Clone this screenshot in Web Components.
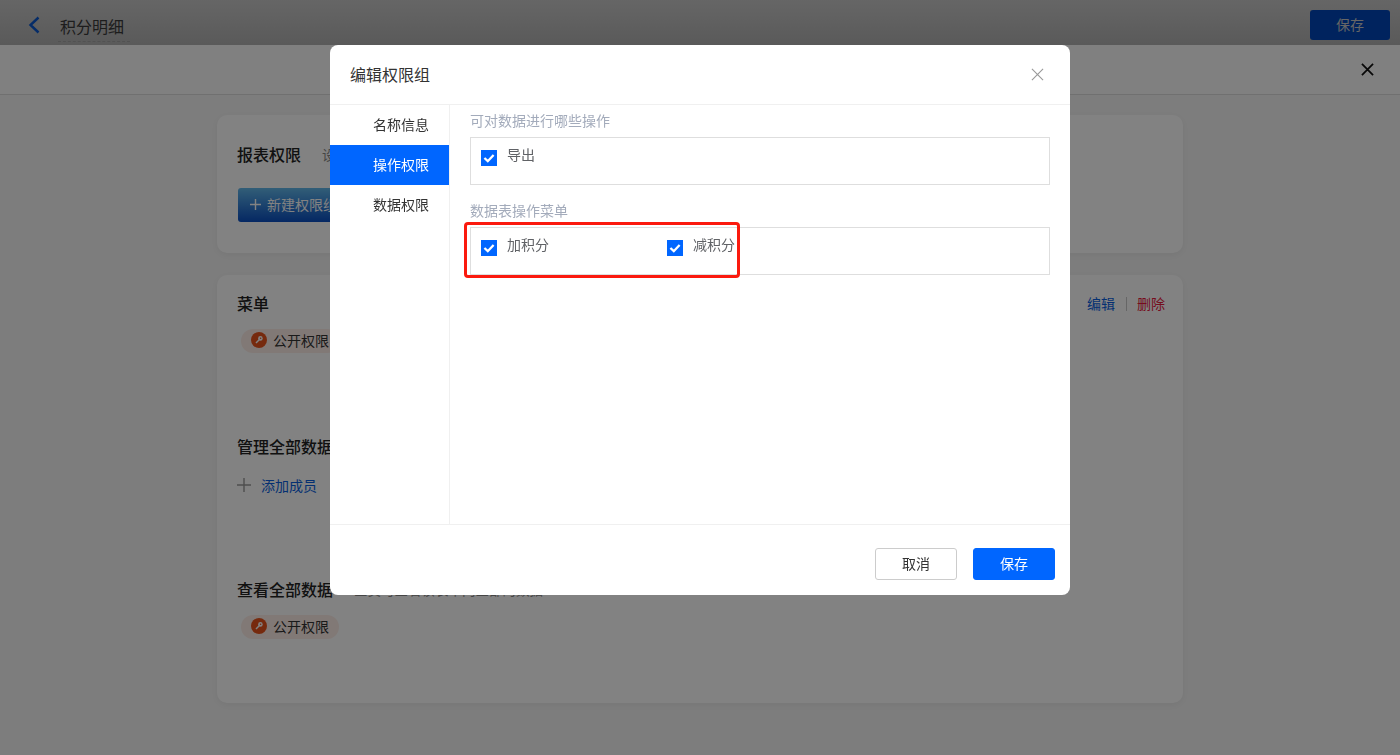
<!DOCTYPE html>
<html lang="zh">
<head>
<meta charset="utf-8">
<title>积分明细</title>
<style>
    html, body {
        margin: 0;
        height: 100%;
        overflow: hidden;
        font-family: "Noto Sans CJK SC", "Liberation Sans", sans-serif;
        font-size: 14px;
        color: #333;
        background: #f5f5f5;
    }
</style>
</head>
<body>
<top-bar title-text="积分明细"></top-bar>
<sub-bar></sub-bar>
<page-content>
    <perm-card>
        <card-section heading="报表权限" note="设置">
            <new-group-button>新建权限组</new-group-button>
        </card-section>
    </perm-card>
    <perm-card tall>
        <card-section heading="菜单" actions>
            <role-tag>公开权限</role-tag>
        </card-section>
        <card-section heading="管理全部数据" note="管理员可管理表单内全部的数据">
            <add-member>添加成员</add-member>
        </card-section>
        <card-section heading="查看全部数据" note="全员可查看该表单内全部的数据">
            <role-tag>公开权限</role-tag>
        </card-section>
    </perm-card>
</page-content>
<edit-dialog heading="编辑权限组">
    <check-group label="可对数据进行哪些操作">
        <check-item>导出</check-item>
    </check-group>
    <check-group label="数据表操作菜单" marked>
        <check-item>加积分</check-item>
        <check-item>减积分</check-item>
    </check-group>
</edit-dialog>

<script>
const CLOSE_ICON = (size, stroke, width) => `
<svg width="${size}" height="${size}" viewBox="0 0 14 14" fill="none" stroke="${stroke}" stroke-width="${width}">
    <path d="M1 1 L13 13 M13 1 L1 13"/>
</svg>`;

class TopBar extends HTMLElement {
    constructor() {
        super();
        this.attachShadow({ mode: 'open' }).innerHTML = `
<style>
    :host {
        display: flex;
        align-items: center;
        height: 45px;
        box-sizing: border-box;
        padding: 5px 10px 0 28px;
        background: linear-gradient(#c8c8c8, #b0b0b0);
    }
    svg { display: block; margin-right: 18px; }
    .title {
        font-size: 16px;
        line-height: 24px;
        margin: 7px 0 0 0;
        padding: 0 6px 3px 2px;
        color: #3a3a3a;
        border-bottom: 1px dashed #a0a0a0;
        position: relative;
        top: -1px;
    }
    .save {
        margin-left: auto;
        width: 80px;
        height: 30px;
        box-sizing: border-box;
        padding-bottom: 2px;
        border-radius: 3px;
        background: #0046b8;
        color: #c8c8c8;
        display: flex;
        align-items: center;
        justify-content: center;
    }
</style>
<svg width="12" height="18" viewBox="0 0 12 18" fill="none" stroke="#0a56cc" stroke-width="2.4"><path d="M10.5 1.5 L2.5 9 L10.5 16.5"/></svg>
<span class="title">${this.getAttribute('title-text')}</span>
<span class="save">保存</span>`;
    }
}

class SubBar extends HTMLElement {
    constructor() {
        super();
        this.attachShadow({ mode: 'open' }).innerHTML = `
<style>
    :host {
        display: flex;
        justify-content: flex-end;
        align-items: center;
        height: 50px;
        box-sizing: border-box;
        padding: 0 26px 0 0;
        background: #fbfbfb;
        border-bottom: 1px solid #dcdcdc;
    }
    svg { display: block; }
</style>
${CLOSE_ICON(13, '#111', 1.9)}`;
    }
}

class PageContent extends HTMLElement {
    constructor() {
        super();
        this.attachShadow({ mode: 'open' }).innerHTML = `
<style>
    :host {
        display: flex;
        flex-direction: column;
        gap: 22px;
        width: 966px;
        margin: 20px auto 0;
    }
</style>
<slot></slot>`;
    }
}

class PermCard extends HTMLElement {
    constructor() {
        super();
        this.attachShadow({ mode: 'open' }).innerHTML = `
<style>
    :host {
        display: block;
        box-sizing: border-box;
        height: 138px;
        padding: 18px 20px 0;
        background: #fff;
        border-radius: 10px;
        box-shadow: 0 2px 6px rgba(0, 0, 0, .05);
    }
    :host([tall]) { height: 428px; }
</style>
<slot></slot>`;
    }
}

class CardSection extends HTMLElement {
    constructor() {
        super();
        const note = this.getAttribute('note');
        const actions = this.hasAttribute('actions') ? `
<span class="actions"><a class="edit">编辑</a><i></i><a class="del">删除</a></span>` : '';
        this.attachShadow({ mode: 'open' }).innerHTML = `
<style>
    :host { display: block; height: 143px; }
    :host(:first-child:last-child) { height: auto; padding-top: 11px; }
    .head { display: flex; align-items: center; height: 20px; }
    h3 { margin: 0; font-size: 16px; font-weight: 500; color: #222; }
    .note { margin-left: 21px; color: #888; font-size: 13.5px; }
    .actions { margin: 0 -2px 0 auto; display: flex; align-items: center; }
    .edit { color: #0a5fe0; }
    .del { color: #e8183c; }
    i { width: 1px; height: 14px; background: #c8c8c8; margin: 2px 10px 0 11px; }
    .body { margin-top: 16px; }
</style>
<div class="head"><h3>${this.getAttribute('heading')}</h3>${note ? `<span class="note">${note}</span>` : ''}${actions}</div>
<div class="body"><slot></slot></div>`;
    }
}

class NewGroupButton extends HTMLElement {
    constructor() {
        super();
        this.attachShadow({ mode: 'open' }).innerHTML = `
<style>
    :host {
        display: inline-flex;
        align-items: center;
        gap: 6px;
        height: 34px;
        box-sizing: border-box;
        margin: 8px 0 0 1px;
        padding: 0 12px 2px;
        border-radius: 3px;
        color: #fff;
        background: linear-gradient(#62b8ea, #0a4ec2);
    }
    svg { display: block; }
</style>
<svg width="11" height="11" viewBox="0 0 11 11" stroke="#fff" stroke-width="1.4"><path d="M5.5 0 V11 M0 5.5 H11"/></svg>
<slot></slot>`;
    }
}

class RoleTag extends HTMLElement {
    constructor() {
        super();
        this.attachShadow({ mode: 'open' }).innerHTML = `
<style>
    :host {
        display: inline-flex;
        align-items: center;
        gap: 6px;
        height: 24px;
        box-sizing: border-box;
        margin-left: 4px;
        padding: 0 10px 2px;
        border-radius: 12px;
        background: #fdeee8;
        color: #333;
    }
    svg { display: block; }
</style>
<svg width="16" height="16" viewBox="0 0 16 16">
    <circle cx="8" cy="8" r="8" fill="#e8541c"/>
    <circle cx="9.4" cy="6.4" r="2.3" fill="#fff"/>
    <circle cx="9.6" cy="6.2" r=".8" fill="#e8541c"/>
    <path d="M8.2 7.8 L5 11" stroke="#fff" stroke-width="1.5"/>
</svg>
<slot></slot>`;
    }
}

class AddMember extends HTMLElement {
    constructor() {
        super();
        this.attachShadow({ mode: 'open' }).innerHTML = `
<style>
    :host {
        display: flex;
        align-items: center;
        gap: 10px;
        height: 22px;
        margin-top: 18px;
        color: #0a5fe0;
    }
    svg { display: block; }
</style>
<svg width="14" height="14" viewBox="0 0 14 14" stroke="#999" stroke-width="1.4"><path d="M7 0 V14 M0 7 H14"/></svg>
<slot></slot>`;
    }
}

class CheckGroup extends HTMLElement {
    constructor() {
        super();
        this.attachShadow({ mode: 'open' }).innerHTML = `
<style>
    :host {
        display: block;
        position: relative;
        margin-bottom: 15px;
    }
    .label {
        height: 22px;
        line-height: 20px;
        margin-bottom: 5px;
        color: #a3abbb;
    }
    .box {
        display: flex;
        height: 48px;
        box-sizing: border-box;
        padding: 10px;
        border: 1px solid #dedede;
    }
    .mark {
        position: absolute;
        left: -6px;
        top: 22px;
        width: 276px;
        height: 56px;
        box-sizing: border-box;
        border: 3px solid #fb1a0e;
        border-radius: 4px;
    }
</style>
<div class="label">${this.getAttribute('label')}</div>
<div class="box"><slot></slot></div>
${this.hasAttribute('marked') ? '<div class="mark"></div>' : ''}`;
    }
}

class CheckItem extends HTMLElement {
    constructor() {
        super();
        this.attachShadow({ mode: 'open' }).innerHTML = `
<style>
    :host {
        display: flex;
        align-items: flex-start;
        width: 186px;
        color: #606266;
        line-height: 12px;
    }
    svg { display: block; margin: 2px 10px 0 0; }
</style>
<svg width="16" height="16" viewBox="0 0 16 16">
    <rect width="16" height="16" fill="#0066ff"/>
    <path d="M3.4 8 L6.8 11.2 L12.6 5" fill="none" stroke="#fff" stroke-width="2.3"/>
</svg>
<slot></slot>`;
    }
}

class UiButton extends HTMLElement {
    constructor() {
        super();
        this.attachShadow({ mode: 'open' }).innerHTML = `
<style>
    :host {
        display: flex;
        align-items: center;
        justify-content: center;
        width: 82px;
        height: 32px;
        box-sizing: border-box;
        padding-bottom: 2px;
        border-radius: 3px;
        border: 1px solid #ccc;
        background: #fff;
        color: #333;
    }
    :host([primary]) {
        border-color: #0066ff;
        background: #0066ff;
        color: #fff;
    }
</style>
<slot></slot>`;
    }
}

class EditDialog extends HTMLElement {
    constructor() {
        super();
        this.attachShadow({ mode: 'open' }).innerHTML = `
<style>
    :host {
        position: fixed;
        inset: 0;
        display: flex;
        justify-content: center;
        align-items: flex-start;
        padding-top: 45px;
        background: rgba(0, 0, 0, .49);
    }
    .dialog {
        display: flex;
        flex-direction: column;
        width: 740px;
        height: 550px;
        background: #fff;
        border-radius: 8px;
    }
    header {
        display: flex;
        align-items: center;
        justify-content: space-between;
        height: 60px;
        box-sizing: border-box;
        padding: 0 26px 0 20px;
        border-bottom: 1px solid #f0f0f0;
        font-size: 16px;
        color: #333;
    }
    header span { margin-top: -2px; }
    header svg { display: block; }
    .main { display: flex; flex: 1; min-height: 0; }
    nav {
        width: 119px;
        border-right: 1px solid #f0f0f0;
    }
    nav div {
        height: 40px;
        line-height: 38px;
        padding-right: 20px;
        text-align: right;
        color: #333;
    }
    nav .active { background: #0066ff; color: #fff; }
    .panel { flex: 1; padding: 5px 20px 0; }
    footer {
        display: flex;
        justify-content: flex-end;
        gap: 16px;
        height: 71px;
        box-sizing: border-box;
        padding: 23px 15px 0 0;
        border-top: 1px solid #f0f0f0;
    }
</style>
<div class="dialog">
    <header>
        <span>${this.getAttribute('heading')}</span>
        ${CLOSE_ICON(13, '#999', 1.2)}
    </header>
    <div class="main">
        <nav>
            <div>名称信息</div>
            <div class="active">操作权限</div>
            <div>数据权限</div>
        </nav>
        <div class="panel"><slot></slot></div>
    </div>
    <footer>
        <ui-button>取消</ui-button>
        <ui-button primary>保存</ui-button>
    </footer>
</div>`;
    }
}

customElements.define('top-bar', TopBar);
customElements.define('sub-bar', SubBar);
customElements.define('page-content', PageContent);
customElements.define('perm-card', PermCard);
customElements.define('card-section', CardSection);
customElements.define('new-group-button', NewGroupButton);
customElements.define('role-tag', RoleTag);
customElements.define('add-member', AddMember);
customElements.define('check-group', CheckGroup);
customElements.define('check-item', CheckItem);
customElements.define('ui-button', UiButton);
customElements.define('edit-dialog', EditDialog);
</script>
</body>
</html>
